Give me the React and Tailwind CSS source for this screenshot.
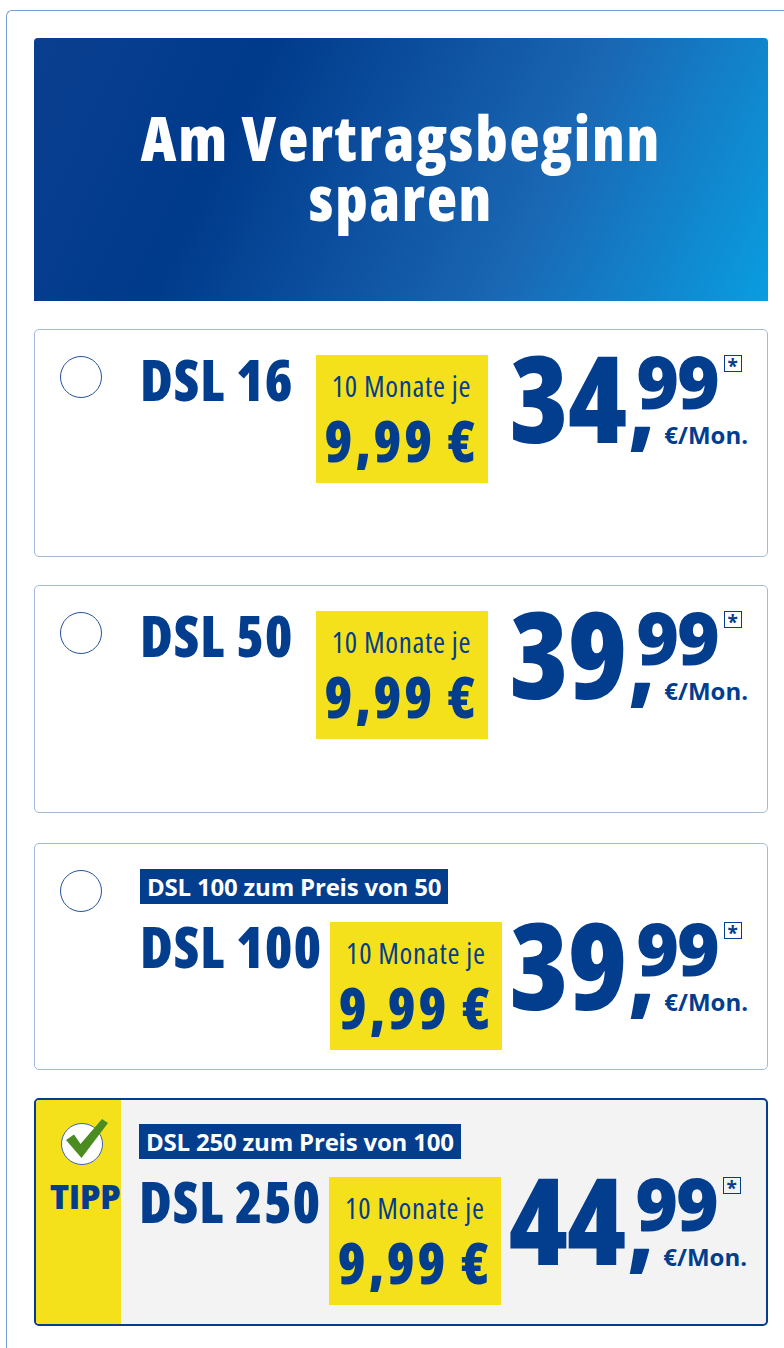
const NAVY = "text-[#033d8e]";

function Radio() {
  return (
    <div className="w-[42px] h-[42px] rounded-full border border-[#25529f] bg-white" />
  );
}

function CheckRadio() {
  return (
    <div className="relative w-[42px] h-[42px] rounded-full border border-[#3a66b4] bg-white">
      <svg
        className="absolute left-[-1px] top-[-1px] overflow-visible"
        width="42"
        height="42"
        viewBox="0 0 42 42"
      >
        <path
          d="M5 17 L13 11.5 L19.5 21 L41 -4 L47 0 L20.5 35 Z"
          fill="#4a8c1f"
        />
      </svg>
    </div>
  );
}

function YellowBox() {
  return (
    <div className="w-[172px] h-[128px] bg-[#f4e11b] flex flex-col items-center pt-[13px]">
      <div className={`text-[29px] leading-[36px] font-normal tracking-[0.7px] ${NAVY} whitespace-nowrap`}>
        10 Monate je
      </div>
      <div className={`mt-[8px] text-[56px] leading-[56px] font-extrabold tracking-[3px] ${NAVY} whitespace-nowrap`}>
        9,99 €
      </div>
    </div>
  );
}

function Price({ euros }) {
  return (
    <div className={`flex items-start ${NAVY}`}>
      <span className="text-[120px] leading-[83px] font-extrabold tracking-[-1px]">{euros}</span>
      <div className="relative ml-[10px]">
        <div className="flex items-start">
          <span className="text-[73px] leading-[52px] font-extrabold [font-stretch:100%] tracking-[-2px]">99</span>
          <span className="ml-[6px] w-[18px] h-[17px] border-[1.5px] border-[#033d8e] flex items-start justify-center text-[19px] leading-[20px] font-bold [font-stretch:100%]">
            *
          </span>
        </div>
        <span className="absolute left-[-8px] top-[7px] text-[88px] leading-[88px] font-extrabold [font-stretch:100%]">
          ,
        </span>
        <div className="mt-[16px] pl-[28px] text-[24px] leading-[24px] font-bold whitespace-nowrap [font-stretch:100%]">
          €/Mon.
        </div>
      </div>
    </div>
  );
}

function Tag({ children }) {
  return (
    <div className="mb-[18px] flex">
      <div className="h-[35px] bg-[#033d8e] px-[7px] text-white text-[24px] leading-[35px] font-bold tracking-[-0.2px] whitespace-nowrap [font-stretch:100%]">
        {children}
      </div>
    </div>
  );
}

function Card({ name, euros, tag, tipp, extra = "" }) {
  return (
    <div
      className={`h-[228px] rounded-[5px] flex overflow-hidden ${
        tipp
          ? "border-2 border-[#033d8e] bg-[#f3f3f3]"
          : "border border-[#a3bad8] bg-white"
      } ${extra}`}
    >
      {tipp ? (
        <div className="w-[85px] bg-[#f4e11b] flex flex-col items-center pt-[23px] pl-[7px]">
          <CheckRadio />
          <div className={`mt-[12px] text-[33px] leading-[40px] font-extrabold tracking-[-0.6px] ${NAVY} pl-[6px] [font-stretch:100%]`}>
            TIPP
          </div>
        </div>
      ) : (
        <div className="w-[105px] pt-[26px] pl-[25px]">
          <Radio />
        </div>
      )}
      <div className={`flex-1 ${tipp ? "pl-[18px] pt-[24px]" : "pt-[25px]"} pr-[19px]`}>
        {tag && <Tag>{tag}</Tag>}
        <div className="flex items-start">
          <div className={`text-[56px] leading-[48px] font-extrabold tracking-[1px] ${NAVY} whitespace-nowrap`}>
            {name}
          </div>
          <div className="flex-1 flex justify-center">
            <YellowBox />
          </div>
          <Price euros={euros} />
        </div>
      </div>
    </div>
  );
}

export default function App() {
  return (
    <div className="w-[784px] min-h-[1348px] bg-white overflow-hidden font-['Open_Sans',sans-serif] [font-stretch:75%]">
      <div className="ml-[6px] mt-[10px] min-h-[1338px] border-l border-t border-[#7b9dcf] rounded-tl-[6px] pl-[27px] pt-[27px] pr-[16px]">
        <div className="h-[263px] rounded-t-[4px] bg-[linear-gradient(115deg,#0b3f90_0%,#003a8b_28%,#1a67b4_68%,#0a9de0_100%)] flex items-center justify-center">
          <h1 className="text-white text-[62px] leading-[60px] font-extrabold tracking-[1.8px] text-center mt-[-6px]">
            Am Vertragsbeginn
            <br />
            sparen
          </h1>
        </div>
        <div className="mt-[28px] flex flex-col">
          <Card name="DSL 16" euros="34" />
          <Card name="DSL 50" euros="39" extra="mt-[28px]" />
          <Card
            name="DSL 100"
            euros="39"
            tag="DSL 100 zum Preis von 50"
            extra="mt-[30px] !h-[227px]"
          />
          <Card
            name="DSL 250"
            euros="44"
            tag="DSL 250 zum Preis von 100"
            tipp
            extra="mt-[28px]"
          />
        </div>
      </div>
    </div>
  );
}
